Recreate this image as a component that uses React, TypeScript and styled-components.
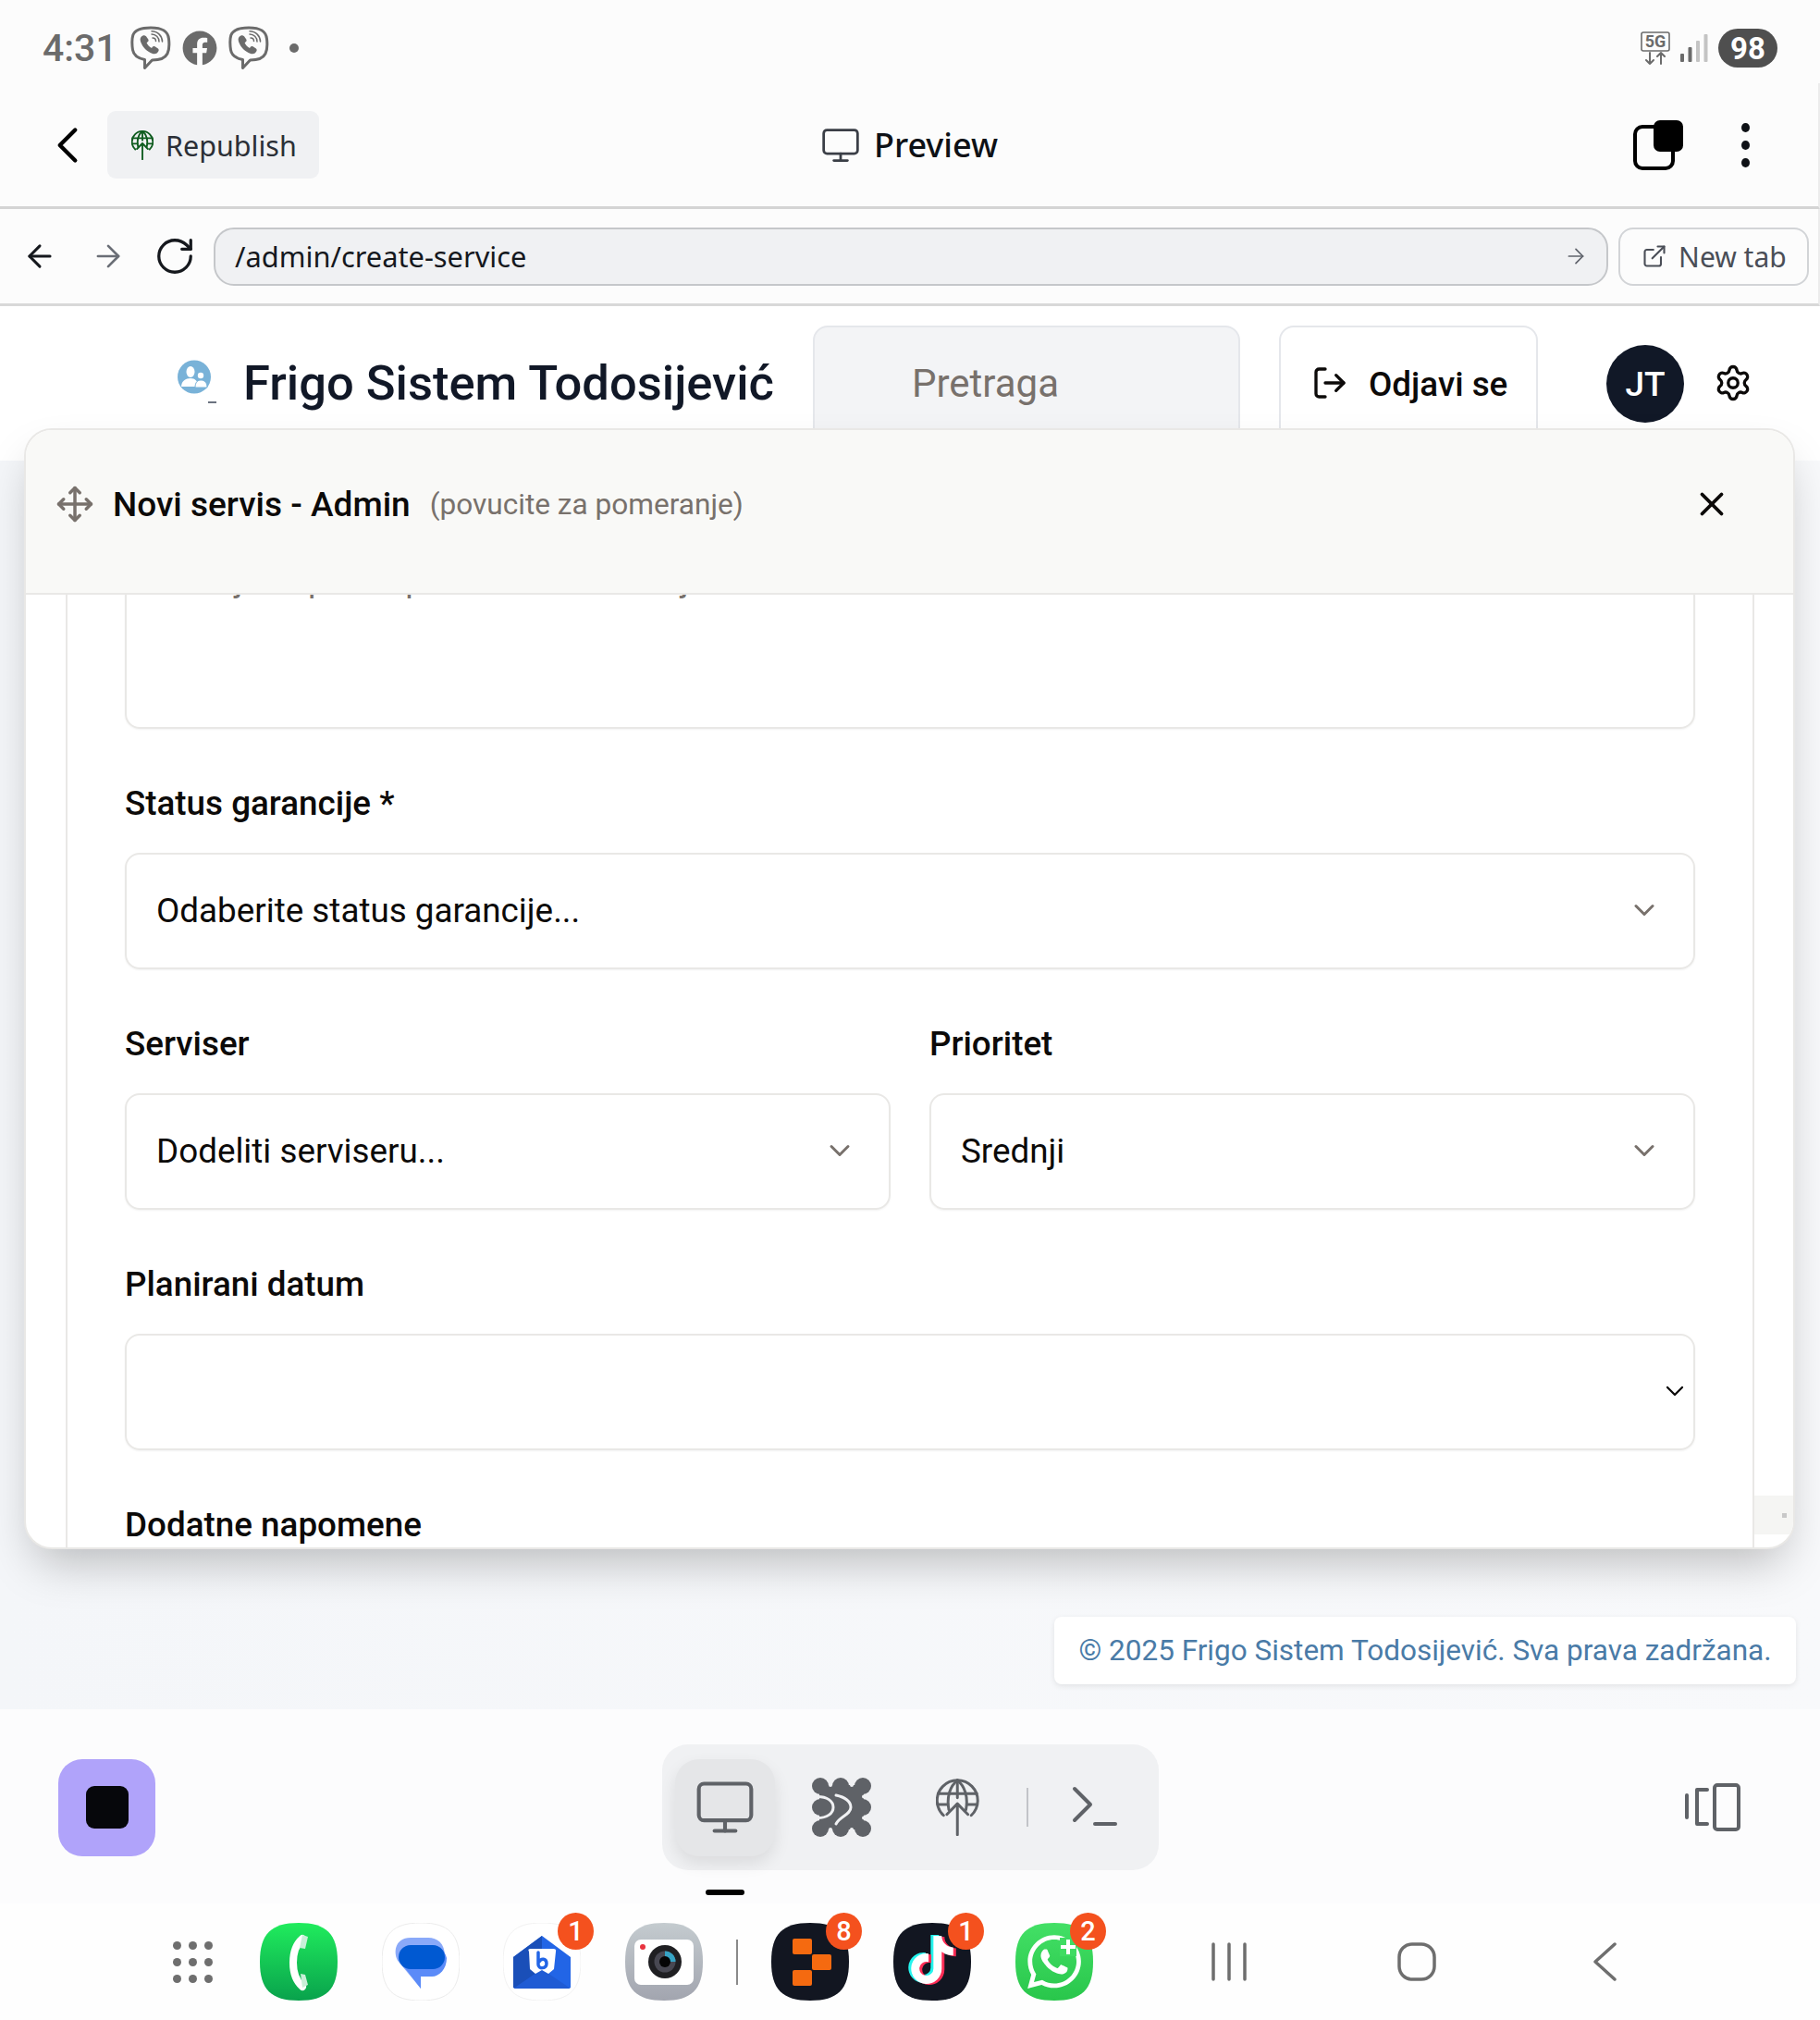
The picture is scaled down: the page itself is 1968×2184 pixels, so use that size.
import React from 'react';
import styled, { createGlobalStyle } from 'styled-components';
import {
  ArrowLeft,
  ArrowRight,
  ChevronDown,
  ChevronLeft,
  ExternalLink,
  LogOut,
  Monitor,
  Move,
  RotateCw,
  Settings,
  X,
} from 'lucide-react';
import { FaFacebook, FaTiktok, FaWhatsapp } from 'react-icons/fa';

const GlobalStyle = createGlobalStyle`
  html, body {
    margin: 0;
    padding: 0;
    background: #fcfcfc;
  }
  * {
    box-sizing: border-box;
  }
`;

const Screen = styled.div`
  width: 1968px;
  height: 2184px;
  display: flex;
  flex-direction: column;
  overflow: hidden;
  background: #fcfcfc;
  font-family: Roboto, "Liberation Sans", sans-serif;
`;

/* phone status bar */
const StatusBar = styled.div`
  height: 90px;
  flex: none;
  display: flex;
  align-items: center;
  justify-content: space-between;
  padding: 14px 46px 0 46px;
  color: #6b6b6b;
`;

const StatusGroup = styled.div<{ $gap: number }>`
  display: flex;
  align-items: center;
  gap: ${({ $gap }) => $gap}px;
`;

const Clock = styled.span`
  font-size: 41px;
  font-weight: 500;
  margin-right: 6px;
`;

const NotifDot = styled.span`
  width: 10px;
  height: 10px;
  border-radius: 50%;
  background: #6b6b6b;
  margin-left: 14px;
`;

const Battery = styled.span`
  width: 64px;
  height: 42px;
  border-radius: 21px;
  background: #4f4f4f;
  color: #fff;
  font-size: 33px;
  font-weight: 700;
  display: flex;
  align-items: center;
  justify-content: center;
`;

/* builder top bar */
const TopBar = styled.div`
  height: 136px;
  flex: none;
  display: grid;
  grid-template-columns: 1fr auto 1fr;
  align-items: center;
  padding: 0 40px;
  border-bottom: 3px solid #d4d4d4;
  border-right: 2px solid #ececec;
  font-family: Inter, "Liberation Sans", sans-serif;
`;

const TopLeft = styled.div`
  display: flex;
  align-items: center;
  gap: 10px;
`;

const TopRight = styled.div`
  display: flex;
  align-items: center;
  justify-content: flex-end;
  gap: 63px;
  padding-right: 34px;
`;

const Republish = styled.div`
  width: 229px;
  height: 73px;
  border-radius: 9px;
  background: #f0f1f3;
  color: #2b2f36;
  display: flex;
  align-items: center;
  gap: 13px;
  padding-left: 26px;
  font-family: "Noto Sans", sans-serif;
  font-size: 30.5px;
`;

const PreviewLabel = styled.div`
  display: flex;
  align-items: center;
  gap: 14px;
  color: #0e1116;
  font-family: "Noto Sans", sans-serif;
  font-size: 36px;
  font-weight: 500;
`;

const KebabDots = styled.div`
  display: flex;
  flex-direction: column;
  gap: 9px;
  span {
    width: 9px;
    height: 10px;
    border-radius: 50%;
    background: #0e1116;
  }
`;

/* url bar */
const UrlBar = styled.div`
  height: 105px;
  flex: none;
  display: flex;
  align-items: center;
  padding: 0 10px 0 24px;
  border-bottom: 3px solid #d8d8d8;
  border-right: 2px solid #ececec;
`;

const NavIcons = styled.div`
  display: flex;
  align-items: center;
  gap: 30px;
  margin-right: 19px;
`;

const UrlField = styled.div`
  width: 1509px;
  height: 63px;
  border: 2px solid #c5c7ca;
  border-radius: 22px;
  background: #f0f1f3;
  display: flex;
  align-items: center;
  justify-content: space-between;
  padding: 0 20px 0 21px;
  color: #15181d;
  font-family: "Noto Sans", sans-serif;
  font-size: 30.8px;
`;

const NewTab = styled.div`
  width: 206px;
  height: 63px;
  margin-left: 11px;
  border: 2px solid #d2d4d7;
  border-radius: 16px;
  display: flex;
  align-items: center;
  gap: 12px;
  padding-left: 23px;
  color: #4a4e57;
  font-family: "Noto Sans", sans-serif;
  font-size: 30px;
  white-space: nowrap;
`;

/* preview */
const Preview = styled.div`
  position: relative;
  height: 1517px;
  flex: none;
  display: flex;
  flex-direction: column;
`;

const AppHeader = styled.header`
  height: 167px;
  flex: none;
  background: #fff;
  display: flex;
  align-items: flex-start;
  padding: 21px 0 0 192px;
  overflow: hidden;
`;

const Brand = styled.div`
  display: flex;
  align-items: center;
  height: 130px;
  width: 687px;
  padding-bottom: 6px;
  gap: 25px;
`;

const Title = styled.h1`
  margin: 0;
  color: #111827;
  font-size: 52.5px;
  font-weight: 500;
  white-space: nowrap;
`;

const SearchBox = styled.div`
  width: 462px;
  height: 146px;
  border: 2px solid #e5e7eb;
  border-radius: 16px;
  background: #f3f4f6;
  color: #78716c;
  font-size: 42px;
  padding: 36px 0 0 105px;
  margin-right: 42px;
`;

const LogoutButton = styled.div`
  width: 280px;
  height: 146px;
  border: 2px solid #e5e7eb;
  border-radius: 16px;
  background: #fff;
  color: #0c0a09;
  font-size: 36.8px;
  font-weight: 500;
  display: flex;
  align-items: flex-start;
  gap: 22px;
  padding: 40px 0 0 33px;
  margin-right: 74px;
`;

const Avatar = styled.div`
  width: 84px;
  height: 84px;
  margin-top: 21px;
  margin-right: 32px;
  border-radius: 50%;
  background: #111827;
  color: #fff;
  font-size: 37px;
  font-weight: 500;
  display: flex;
  align-items: center;
  justify-content: center;
`;

const GearSlot = styled.div`
  margin-top: 41px;
  display: flex;
`;

const Main = styled.main`
  flex: 1;
  display: flex;
  flex-direction: column;
  justify-content: flex-end;
  align-items: flex-end;
  padding: 0 26px 27px 0;
  background: linear-gradient(90deg, #f4f6f9 0%, #f8f9fb 100%);
`;

const Copyright = styled.div`
  width: 802px;
  height: 73px;
  border-radius: 8px;
  background: #fff;
  box-shadow: 0 2px 6px rgba(0, 0, 0, 0.09);
  color: #4a7ba7;
  font-size: 31.5px;
  display: flex;
  align-items: center;
  justify-content: center;
  white-space: nowrap;
`;

/* floating dialog */
const Dialog = styled.section`
  position: absolute;
  left: 26px;
  top: 132px;
  width: 1915px;
  height: 1212px;
  border: 2px solid #e9e8e6;
  border-radius: 30px;
  background: #fff;
  box-shadow: 0 25px 50px -12px rgba(0, 0, 0, 0.25);
  display: flex;
  flex-direction: column;
  overflow: hidden;
`;

const DialogHeader = styled.div`
  height: 178px;
  flex: none;
  background: #f9f9f7;
  border-bottom: 2px solid #e9e8e6;
  display: flex;
  align-items: flex-start;
  padding: 59px 0 0 32px;
  position: relative;
  z-index: 1;
`;

const DialogTitle = styled.span`
  margin-left: 20px;
  color: #0c0a09;
  font-size: 37px;
  font-weight: 500;
`;

const DialogHint = styled.span`
  margin-left: 21px;
  margin-top: 3px;
  color: #78716c;
  font-size: 31.6px;
`;

const CloseSlot = styled.div`
  margin-left: auto;
  margin-right: 67px;
  display: flex;
`;

const DialogBody = styled.div`
  position: relative;
  flex: 1;
  min-height: 0;
  padding: 0 42px 0 43px;
  overflow: hidden;
`;

const ScrollCorner = styled.div`
  position: absolute;
  right: 0;
  bottom: 14px;
  width: 42px;
  height: 42px;
  background: #f5f5f3;
  display: flex;
  align-items: center;
  justify-content: center;
  &::after {
    content: '';
    width: 5px;
    height: 5px;
    background: #c8c8c8;
    margin-left: 22px;
  }
`;

const FormCard = styled.div`
  height: 100%;
  border-left: 2px solid #e9e8e6;
  border-right: 2px solid #e9e8e6;
  padding: 0 62px;
  overflow: hidden;
`;

const Form = styled.div`
  margin-top: -48px;
  display: flex;
  flex-direction: column;
  gap: 58px;
`;

const TextArea = styled.div`
  height: 193px;
  border: 2px solid #e9e8e6;
  border-radius: 16px;
  box-shadow: 0 1px 2px rgba(0, 0, 0, 0.05);
  padding: 10px 32px;
  color: #78716c;
  font-size: 36.8px;
  line-height: 40px;
  white-space: nowrap;
`;

const Field = styled.div`
  display: flex;
  flex-direction: column;
  gap: 30px;
  flex: 1;
  min-width: 0;
`;

const FieldRow = styled.div`
  display: flex;
  gap: 42px;
`;

const Label = styled.label`
  color: #0c0a09;
  font-size: 36.8px;
  line-height: 46px;
  font-weight: 500;
  white-space: nowrap;
`;

const SelectBox = styled.div`
  height: 126px;
  border: 2px solid #e9e8e6;
  border-radius: 16px;
  box-shadow: 0 1px 2px rgba(0, 0, 0, 0.05);
  display: flex;
  align-items: center;
  justify-content: space-between;
  padding: 0 35px 2px 32px;
  color: #0c0a09;
  font-size: 36.8px;
`;

const DateBox = styled(SelectBox)`
  padding-right: 4px;
`;

/* builder bottom toolbar */
const BuilderBar = styled.div`
  height: 210px;
  flex: none;
  display: grid;
  grid-template-columns: 1fr auto 1fr;
  align-items: center;
  padding: 0 63px;
  background: #fcfcfd;
`;

const StopButton = styled.div`
  width: 105px;
  height: 105px;
  margin-top: 2px;
  border-radius: 26px;
  background: #b0a3fa;
  display: flex;
  align-items: center;
  justify-content: center;
  &::after {
    content: '';
    width: 46px;
    height: 46px;
    border-radius: 9px;
    background: #06070b;
  }
`;

const ToolPill = styled.div`
  height: 136px;
  width: 537px;
  margin-top: 2px;
  border-radius: 28px;
  background: #f0f1f3;
  display: flex;
  align-items: center;
  gap: 18px;
  padding: 0 14px;
`;

const ToolSlot = styled.div<{ $active?: boolean }>`
  position: relative;
  width: 108px;
  height: 105px;
  flex: none;
  border-radius: 26px;
  display: flex;
  align-items: center;
  justify-content: center;
  color: #5f6267;
  background: ${({ $active }) => ($active ? '#e5e6e8' : 'transparent')};
  box-shadow: ${({ $active }) => ($active ? '0 8px 18px rgba(0,0,0,0.09)' : 'none')};
  ${({ $active }) =>
    $active &&
    `&::after {
      content: '';
      position: absolute;
      left: 33px;
      bottom: -42px;
      width: 42px;
      height: 6px;
      border-radius: 3px;
      background: #000;
    }`}
`;

const ToolSep = styled.div`
  width: 2px;
  height: 42px;
  flex: none;
  margin-left: 2px;
  background: #c2c4c8;
`;

const DeviceSlot = styled.div`
  display: flex;
  justify-content: flex-end;
  margin-top: 2px;
  padding-right: 23px;
`;

/* android dock */
const Dock = styled.div`
  height: 126px;
  flex: none;
  display: flex;
  align-items: center;
  padding: 0 0 0 187px;
  background: #fefefe;
`;

const DockItem = styled.div<{ $left?: number }>`
  position: relative;
  flex: none;
  display: flex;
  margin-left: ${({ $left }) => $left ?? 0}px;
  color: #6e6e6e;
`;

const Badge = styled.span`
  position: absolute;
  top: -11px;
  right: -14px;
  width: 39px;
  height: 40px;
  border-radius: 50%;
  background: #f4511e;
  color: #fff;
  font-size: 29px;
  font-weight: 500;
  display: flex;
  align-items: center;
  justify-content: center;
`;

const TikTokStack = styled.div`
  position: absolute;
  inset: 0;
`;

const TikTokLayer = styled.div<{ $dx: number; $dy: number; $color: string }>`
  position: absolute;
  left: 16px;
  top: 14px;
  display: flex;
  color: ${({ $color }) => $color};
  transform: translate(${({ $dx }) => $dx}px, ${({ $dy }) => $dy}px);
`;

const WhatsAppGlyph = styled.div`
  position: absolute;
  inset: 0;
  display: flex;
  align-items: center;
  justify-content: center;
  color: #fff;
`;

const DockDivider = styled.div`
  width: 2px;
  height: 49px;
  background: #8a8a8a;
`;

const DotGrid = styled.div`
  width: 43px;
  display: grid;
  grid-template-columns: repeat(3, 9px);
  justify-content: space-between;
  row-gap: 9px;
  span {
    width: 9px;
    height: 9px;
    border-radius: 50%;
    background: #6e6e6e;
  }
`;

const SQUIRCLE = 'M42 0C72 0 84 12 84 42S72 84 42 84 0 72 0 42 12 0 42 0Z';

const ViberIcon = () => (
  <svg width="44" height="48" viewBox="0 0 44 48" fill="none" stroke="#6b6b6b">
    <path
      d="M22 2C33 2 40.5 4.5 41.5 14C42.2 20 42 26 40 30C37.5 35 31 37 23.5 37L15.5 45.5V36.5C8 35 3.5 32 2.5 26C1.6 20 1.6 14 2.8 10C4.8 4.5 11 2 22 2Z"
      strokeWidth="3"
      strokeLinejoin="round"
    />
    <path
      d="M13.5 10.5C11 11.5 10 14 11 17C13.5 23.5 17.5 27.5 24 30C27 31 29.5 29.5 30.5 27C31 25.8 30.5 25 29.5 24.3L26.5 22.3C25.5 21.7 24.6 21.8 24 22.6L23 24C21 23.2 18.5 20.6 17.6 18.3L19 17C19.8 16.3 19.8 15.4 19.3 14.5L17 11.3C16 10.3 14.7 10 13.5 10.5Z"
      fill="#6b6b6b"
      stroke="none"
    />
    <path d="M23 9C27.5 9 31 12.5 31 17M24 13C26 13 27.5 14.5 27.5 16.5M23 5.8C29.5 5.8 34.5 11 34.5 17" strokeWidth="1.5" strokeLinecap="round" />
  </svg>
);

const FiveGIcon = () => (
  <svg width="32" height="36" viewBox="0 0 32 36" fill="none" stroke="#6b6b6b">
    <rect x="1" y="1" width="30" height="20" rx="2" strokeWidth="1.6" />
    <text x="16" y="17" textAnchor="middle" fontFamily="Roboto, sans-serif" fontSize="18" fontWeight="700" fill="#6b6b6b" stroke="none">
      5G
    </text>
    <path d="M10 23V35M6 31L10 35L14 31M22 35V23M18 27L22 23L26 27" strokeWidth="2" strokeLinecap="round" strokeLinejoin="round" />
  </svg>
);

const SignalIcon = () => (
  <svg width="30" height="30" viewBox="0 0 30 30">
    <rect x="0" y="21" width="4" height="9" rx="1" fill="#6b6b6b" />
    <rect x="8.5" y="14" width="4" height="16" rx="1" fill="#6b6b6b" />
    <rect x="17" y="7" width="4" height="23" rx="1" fill="#c4c4c4" />
    <rect x="25.5" y="0" width="4" height="30" rx="1" fill="#c4c4c4" />
  </svg>
);

const PublishIcon = ({ size, color, weight }: { size: number; color: string; weight: number }) => (
  <svg width={(size * 18) / 24} height={size} viewBox="0 0 18 24" fill="none" stroke={color} strokeWidth={weight} strokeLinecap="round" strokeLinejoin="round">
    <path d="M3.2 15.4A8.5 8.5 0 1 1 14.8 15.4" />
    <path d="M5.4 13C4.4 7.5 6 3 9 0.7C12 3 13.6 7.5 12.6 13" />
    <path d="M9 0.7V8M0.9 6.3H17.1M0.7 10.8H5M13 10.8H17.3" />
    <path d="M9 23.5V10.5M4.6 15L9 10.5L13.4 15" />
  </svg>
);

const TabsIcon = () => (
  <svg width="54" height="54" viewBox="0 0 54 54">
    <rect x="2" y="7" width="41" height="45" rx="8" fill="none" stroke="#000" strokeWidth="4" />
    <rect x="22" y="0" width="32" height="34" rx="7" fill="#000" />
  </svg>
);

const LogoIcon = () => (
  <svg width="46" height="50" viewBox="0 0 46 50">
    <circle cx="18" cy="18.5" r="18" fill="#79b2d8" />
    <ellipse cx="14" cy="13" rx="4.5" ry="6" fill="#fff" />
    <path d="M4 29C4 23 9 20 14 20C19 20 22 23 22 29Z" fill="#fff" />
    <circle cx="25" cy="17" r="3.2" fill="#fff" />
    <path d="M19 30C19 24 22 22 25 22C29 22 32 24 32 30Z" fill="#fff" stroke="#79b2d8" />
    <rect x="33" y="45" width="9" height="2" fill="#6b7280" />
  </svg>
);

const NodesIcon = () => (
  <svg width="64" height="64" viewBox="0 0 64 64">
    <g fill="#5f6267">
      <circle cx="9" cy="9" r="9" />
      <circle cx="31" cy="9" r="9" />
      <circle cx="55" cy="9" r="9" />
      <circle cx="9" cy="32" r="9" />
      <circle cx="55" cy="32" r="9" />
      <circle cx="9" cy="55" r="9" />
      <circle cx="31" cy="55" r="9" />
      <circle cx="55" cy="55" r="9" />
      <rect x="8" y="8" width="48" height="48" />
    </g>
    <g fill="none" stroke="#f0f1f3" strokeLinecap="round">
      <path d="M-2 20.5H6C16 20.5 23 25 23 32C23 39 16 43.5 6 43.5H-2" strokeWidth="3" />
      <path d="M26 19C36 21 42 26 42 32C42 40 30 42 26 50" strokeWidth="3" />
      <path d="M20 -2V8M43 -2V8M20 56V66M43 56V66M56 20.5H66M56 43.5H66" strokeWidth="4" />
    </g>
  </svg>
);

const PromptIcon = () => (
  <svg width="50" height="46" viewBox="0 0 50 46" fill="none" stroke="#5f6267" strokeWidth="4" strokeLinecap="round" strokeLinejoin="round">
    <path d="M3 3L20 20L3 37" />
    <path d="M25 41H47" />
  </svg>
);

const DeviceIcon = () => (
  <svg width="60" height="52" viewBox="0 0 60 52" fill="none" stroke="#5f6267" strokeWidth="4" strokeLinecap="round" strokeLinejoin="round">
    <path d="M2 13V37" />
    <path d="M24 7H13V44H24" />
    <rect x="32" y="2" width="26" height="48" rx="3" />
  </svg>
);

const PhoneApp = () => (
  <svg width="84" height="84" viewBox="0 0 84 84">
    <defs>
      <linearGradient id="phoneGrad" x1="0" y1="0" x2="0" y2="1">
        <stop offset="0" stopColor="#20ec5d" />
        <stop offset="1" stopColor="#09a24c" />
      </linearGradient>
    </defs>
    <path d={SQUIRCLE} fill="url(#phoneGrad)" />
    <path d="M46 17C38 24 36 33 36 43C36 53 38 62 46 69" fill="none" stroke="#fff" strokeWidth="8" strokeLinecap="round" />
    <path d="M46 13L52 15L49 28L43 27ZM44 55L49 56L52 67L46 70Z" fill="#c8efd8" />
  </svg>
);

const MessagesApp = () => (
  <svg width="84" height="84" viewBox="0 0 84 84">
    <path d={SQUIRCLE} fill="#fff" stroke="#ececec" strokeWidth="1" />
    <path d="M31 16H50C60 16 68 22 68 36C68 50 60 58 50 58H42V71L18 42C12 34 13 16 31 16Z" fill="#8aa9f9" />
    <path d="M54 24C62 24 68 30 70 38C70 50 62 58 54 58H42V71L22 45C40 45 60 40 54 24Z" fill="#5b8bf8" />
    <rect x="18" y="24" width="50" height="26" rx="13" fill="#0059d2" />
  </svg>
);

const MailApp = () => (
  <svg width="84" height="84" viewBox="0 0 84 84">
    <path d={SQUIRCLE} fill="#fff" stroke="#f2f2f2" strokeWidth="1" />
    <path d="M42 14L73 37V70H11V37Z" fill="#2265e6" />
    <path d="M42 14L11 37V70H14L42 50Z" fill="#1a4fb8" />
    <path d="M11 71L42 50L73 71Z" fill="#1f5bd4" />
    <path d="M28 31Q26 28 30 28H54Q58 28 57 31L55 50L49 55L42 51L35 55L29 50Z" fill="#fff" />
    <path d="M38 32V45C38 50 47 50 47 44C47 38 41 38 39 42" fill="none" stroke="#2265e6" strokeWidth="3.5" strokeLinecap="round" />
  </svg>
);

const CameraApp = () => (
  <svg width="84" height="84" viewBox="0 0 84 84">
    <defs>
      <linearGradient id="camGrad" x1="0" y1="0" x2="0" y2="1">
        <stop offset="0" stopColor="#c4cbcf" />
        <stop offset="1" stopColor="#a2a5af" />
      </linearGradient>
    </defs>
    <path d={SQUIRCLE} fill="url(#camGrad)" />
    <rect x="10" y="18" width="64" height="49" rx="7" fill="#fff" />
    <circle cx="43" cy="42" r="18" fill="#1f1f22" />
    <circle cx="43" cy="42" r="11.5" fill="#484852" />
    <path d="M43 30.5A11.5 11.5 0 0 1 54.5 42H43Z" fill="#36a3c4" />
    <circle cx="43" cy="42" r="6" fill="#050505" />
    <circle cx="19" cy="26" r="3" fill="#e8333f" />
  </svg>
);

const FragmentApp = () => (
  <svg width="84" height="84" viewBox="0 0 84 84">
    <path d={SQUIRCLE} fill="#121621" />
    <rect x="23" y="17" width="21" height="17" rx="2" fill="#f56a10" />
    <rect x="44" y="34" width="21" height="17" rx="2" fill="#f56a10" />
    <rect x="23" y="51" width="21" height="17" rx="2" fill="#f56a10" />
  </svg>
);

const TikTokBack = () => (
  <svg width="84" height="84" viewBox="0 0 84 84">
    <path d={SQUIRCLE} fill="#121621" />
  </svg>
);

const WhatsAppBack = () => (
  <svg width="84" height="84" viewBox="0 0 84 84">
    <defs>
      <linearGradient id="waGrad" x1="0" y1="0" x2="0" y2="1">
        <stop offset="0" stopColor="#43e066" />
        <stop offset="1" stopColor="#29c64b" />
      </linearGradient>
    </defs>
    <path d={SQUIRCLE} fill="url(#waGrad)" />
  </svg>
);

const WhatsAppPlus = () => (
  <svg width="84" height="84" viewBox="0 0 84 84">
    <rect x="48" y="16" width="18" height="20" fill="#3fdc62" />
    <path d="M57 18V34M49 26H65" stroke="#fff" strokeWidth="4" />
  </svg>
);

const RecentsIcon = () => (
  <svg width="38" height="42" viewBox="0 0 38 42" fill="none" stroke="#6e6e6e" strokeWidth="3.5" strokeLinecap="round">
    <path d="M2 2V40M19 2V40M36 2V40" />
  </svg>
);

const HomeIcon = () => (
  <svg width="42" height="42" viewBox="0 0 42 42" fill="none" stroke="#6e6e6e" strokeWidth="3.5">
    <rect x="2" y="2" width="38" height="38" rx="14" />
  </svg>
);

const BackIcon = () => (
  <svg width="26" height="42" viewBox="0 0 26 42" fill="none" stroke="#6e6e6e" strokeWidth="3.5" strokeLinecap="round" strokeLinejoin="round">
    <path d="M24 2L3 21L24 40" />
  </svg>
);

const App = () => (
  <Screen>
    <GlobalStyle />
    <StatusBar>
      <StatusGroup $gap={8}>
        <Clock>4:31</Clock>
        <ViberIcon />
        <FaFacebook size={38} color="#6b6b6b" style={{ margin: '0 4px' }} />
        <ViberIcon />
        <NotifDot />
      </StatusGroup>
      <StatusGroup $gap={11}>
        <FiveGIcon />
        <SignalIcon />
        <Battery>98</Battery>
      </StatusGroup>
    </StatusBar>

    <TopBar>
      <TopLeft>
        <ChevronLeft size={66} color="#000" strokeWidth={1.6} />
        <Republish>
          <PublishIcon size={32} color="#0f5c1f" weight={1.4} />
          Republish
        </Republish>
      </TopLeft>
      <PreviewLabel>
        <Monitor size={44} color="#3a3e46" strokeWidth={1.5} />
        Preview
      </PreviewLabel>
      <TopRight>
        <TabsIcon />
        <KebabDots>
          <span />
          <span />
          <span />
        </KebabDots>
      </TopRight>
    </TopBar>

    <UrlBar>
      <NavIcons>
        <ArrowLeft size={38} color="#15181d" strokeWidth={1.9} />
        <ArrowRight size={38} color="#6a6e76" strokeWidth={1.7} style={{ marginLeft: 6 }} />
        <RotateCw size={46} color="#15181d" strokeWidth={1.7} />
      </NavIcons>
      <UrlField>
        /admin/create-service
        <ArrowRight size={26} color="#5f636b" strokeWidth={1.6} />
      </UrlField>
      <NewTab>
        <ExternalLink size={28} color="#4a4e57" strokeWidth={1.8} />
        New tab
      </NewTab>
    </UrlBar>

    <Preview>
      <AppHeader>
        <Brand>
          <LogoIcon />
          <Title>Frigo Sistem Todosijević</Title>
        </Brand>
        <SearchBox>Pretraga</SearchBox>
        <LogoutButton>
          <LogOut size={40} strokeWidth={2} />
          Odjavi se
        </LogoutButton>
        <Avatar>JT</Avatar>
        <GearSlot>
          <Settings size={42} color="#0c0a09" strokeWidth={1.9} />
        </GearSlot>
      </AppHeader>

      <Main>
        <Copyright>© 2025 Frigo Sistem Todosijević. Sva prava zadržana.</Copyright>
      </Main>

      <Dialog>
        <DialogHeader>
          <Move size={42} color="#78716c" strokeWidth={2} />
          <DialogTitle>Novi servis - Admin</DialogTitle>
          <DialogHint>(povucite za pomeranje)</DialogHint>
          <CloseSlot>
            <X size={42} color="#0c0a09" strokeWidth={2.2} />
          </CloseSlot>
        </DialogHeader>
        <DialogBody>
          <FormCard>
            <Form>
              <TextArea>Detaljan opis uz problem ili kvar koji</TextArea>
              <Field>
                <Label>Status garancije *</Label>
                <SelectBox>
                  Odaberite status garancije...
                  <ChevronDown size={36} color="#78716c" strokeWidth={2} />
                </SelectBox>
              </Field>
              <FieldRow>
                <Field>
                  <Label>Serviser</Label>
                  <SelectBox>
                    Dodeliti serviseru...
                    <ChevronDown size={36} color="#78716c" strokeWidth={2} />
                  </SelectBox>
                </Field>
                <Field>
                  <Label>Prioritet</Label>
                  <SelectBox>
                    Srednji
                    <ChevronDown size={36} color="#78716c" strokeWidth={2} />
                  </SelectBox>
                </Field>
              </FieldRow>
              <Field>
                <Label>Planirani datum</Label>
                <DateBox>
                  <span />
                  <ChevronDown size={32} color="#0c0a09" strokeWidth={1.7} />
                </DateBox>
              </Field>
              <Field>
                <Label>Dodatne napomene</Label>
              </Field>
            </Form>
          </FormCard>
          <ScrollCorner />
        </DialogBody>
      </Dialog>
    </Preview>

    <BuilderBar>
      <StopButton />
      <ToolPill>
        <ToolSlot $active>
          <Monitor size={68} strokeWidth={1.45} />
        </ToolSlot>
        <ToolSlot>
          <NodesIcon />
        </ToolSlot>
        <ToolSlot>
          <PublishIcon size={62} color="#5f6267" weight={1.15} />
        </ToolSlot>
        <ToolSep />
        <ToolSlot>
          <PromptIcon />
        </ToolSlot>
      </ToolPill>
      <DeviceSlot>
        <DeviceIcon />
      </DeviceSlot>
    </BuilderBar>

    <Dock>
      <DotGrid>
        {Array.from({ length: 9 }).map((_, i) => (
          <span key={i} />
        ))}
      </DotGrid>
      <DockItem $left={51}>
        <PhoneApp />
      </DockItem>
      <DockItem $left={48}>
        <MessagesApp />
      </DockItem>
      <DockItem $left={47}>
        <MailApp />
        <Badge>1</Badge>
      </DockItem>
      <DockItem $left={48}>
        <CameraApp />
      </DockItem>
      <DockItem $left={36}>
        <DockDivider />
      </DockItem>
      <DockItem $left={36}>
        <FragmentApp />
        <Badge>8</Badge>
      </DockItem>
      <DockItem $left={48}>
        <TikTokBack />
        <TikTokStack>
          <TikTokLayer $dx={-3} $dy={-1} $color="#25f4ee">
            <FaTiktok size={52} />
          </TikTokLayer>
          <TikTokLayer $dx={3} $dy={1} $color="#fe2c55">
            <FaTiktok size={52} />
          </TikTokLayer>
          <TikTokLayer $dx={0} $dy={0} $color="#fff">
            <FaTiktok size={52} />
          </TikTokLayer>
        </TikTokStack>
        <Badge>1</Badge>
      </DockItem>
      <DockItem $left={48}>
        <WhatsAppBack />
        <WhatsAppGlyph>
          <FaWhatsapp size={66} />
        </WhatsAppGlyph>
        <WhatsAppGlyph>
          <WhatsAppPlus />
        </WhatsAppGlyph>
        <Badge>2</Badge>
      </DockItem>
      <DockItem $left={128}>
        <RecentsIcon />
      </DockItem>
      <DockItem $left={163}>
        <HomeIcon />
      </DockItem>
      <DockItem $left={169}>
        <BackIcon />
      </DockItem>
    </Dock>
  </Screen>
);

export default App;
